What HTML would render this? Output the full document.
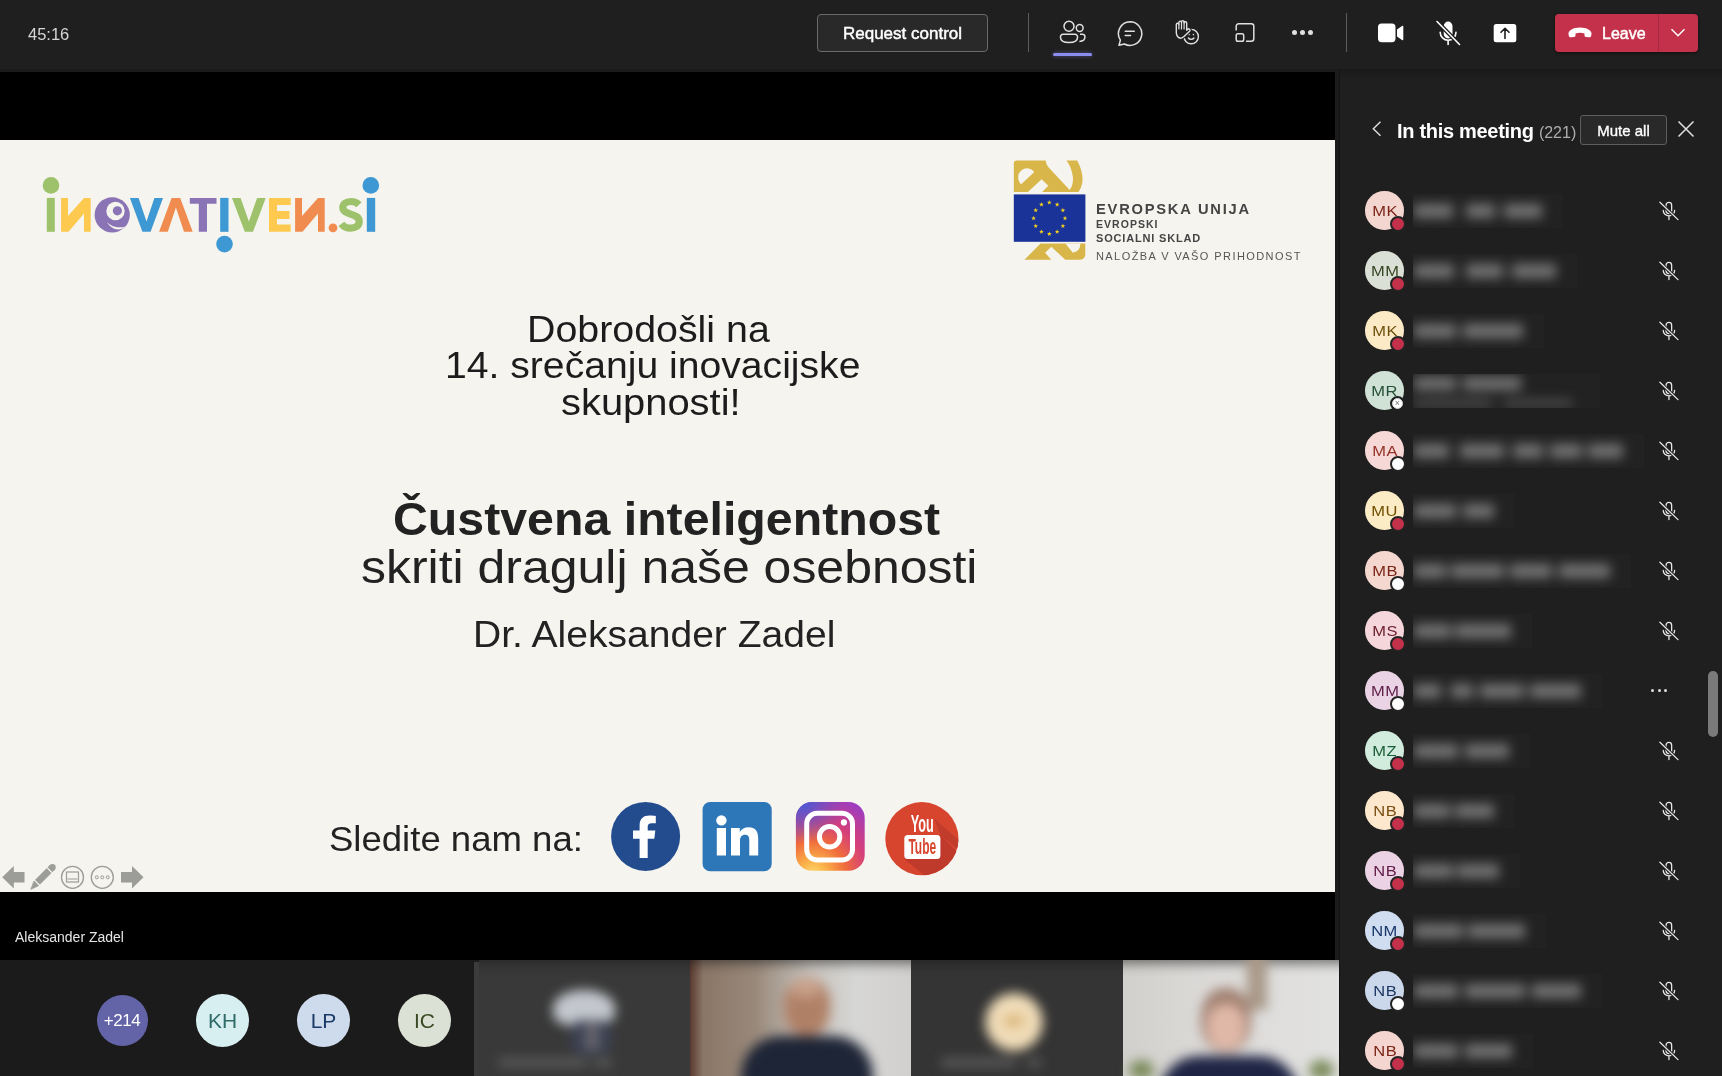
<!DOCTYPE html>
<html><head><meta charset="utf-8">
<style>
*{box-sizing:border-box;margin:0;padding:0}
html,body{width:1722px;height:1076px;overflow:hidden;background:#1f1f1f;font-family:"Liberation Sans",sans-serif}
.a{position:absolute}
body{will-change:transform}
</style></head>
<body>
<!-- TOP BAR -->
<div class="a" style="left:0;top:0;width:1722px;height:69px;background:#1f1f1f"></div>
<div class="a" style="left:0;top:69px;width:1722px;height:3px;background:#1a1a1a"></div>
<!-- STAGE -->
<div class="a" style="left:0;top:72px;width:1335px;height:888px;background:#000"></div>
<div class="a" style="left:1335px;top:69px;width:5px;height:1007px;background:#1b1b1b;border-right:1px solid #141414"></div>
<!-- SLIDE -->
<div id="slide" class="a" style="left:0;top:140px;width:1335px;height:752px;background:#f5f4ee;overflow:hidden">

<svg class="a" style="left:0;top:0" width="1335" height="752" viewBox="0 140 1335 752">
 <!-- inovativen.si -->
 <circle cx="51" cy="185.4" r="8.3" fill="#9dc26b"/>
 <rect x="46.8" y="197.9" width="8" height="33.9" fill="#9dc26b"/>
 <path d="M61.1 197.9H68V216L84 197.9H90.7V231.8H84V213.5L68.5 231.8H61.1Z" fill="#fdc94f"/>
 <circle cx="112.2" cy="214.9" r="17.6" fill="#8b74b5"/>
 <circle cx="115.5" cy="211" r="9.2" fill="#f5f4ee"/>
 <circle cx="117.4" cy="210.8" r="4.6" fill="#8b74b5"/>
 <path d="M106.5 221.5C111 227 119 228.5 125.5 226.5C121 231 112 231 106.5 221.5Z" fill="#f5f4ee"/>
 <path d="M129.9 197.9H138.6L146.5 221.5L154.4 197.9H163L150.6 231.8H142.4Z" fill="#3e98d3"/>
 <path d="M159.1 231.8L171.6 197.9H180.2L192.7 231.8H184L175.9 207.5L167.8 231.8Z" fill="#f08c4f"/>
 <path d="M189.8 197.9H216.5V203.8H207V231.8H198.8V203.8H189.8Z" fill="#8b74b5"/>
 <rect x="220.2" y="197.9" width="8.3" height="33.9" fill="#3e98d3"/>
 <circle cx="224.5" cy="244.1" r="8.3" fill="#3e98d3"/>
 <path d="M232 197.9H240.6L248.9 221.5L257.1 197.9H265.7L253 231.8H244.8Z" fill="#9dc26b"/>
 <path d="M269 197.9H290.7V205H277V211H289.5V219H277V224.6H290.7V231.8H269Z" fill="#fdc94f"/>
 <path d="M295.1 197.9H302V216L318 197.9H324.7V231.8H318V213.5L302.5 231.8H295.1Z" fill="#f08c4f"/>
 <circle cx="333" cy="227.9" r="4.4" fill="#f08c4f"/>
 <path d="M359 204.8C356.8 202.4 353.8 201.5 350.8 201.5C345.8 201.5 342.8 204.2 342.8 207.6C342.8 215.5 359.2 212.6 359.2 221.5C359.2 225.6 355.8 228.1 350.6 228.1C346.6 228.1 343.5 226.6 341.4 223.8" fill="none" stroke="#9dc26b" stroke-width="7.2"/>
 <rect x="366.8" y="197.9" width="8.4" height="33.9" fill="#3e98d3"/>
 <circle cx="370.8" cy="185.4" r="8.3" fill="#3e98d3"/>

 <!-- EU logo -->
 <g transform="translate(1005 152) scale(0.10778)">
  <path d="M82 370V105Q82 80 110 80H378Q382 125 412 150L600 352Q640 300 628 220Q612 130 570 80H670Q732 200 716 290Q706 342 682 370Z" fill="#d9b64a"/>
  <path d="M148 302Q108 250 128 200Q158 150 210 150Q250 155 272 185Z" fill="#f5f4ee"/>
  <path d="M212 372L340 252L402 312L344 372Z" fill="#f5f4ee"/>
  <path d="M180 1000L330 850H745V950Q740 1000 690 1000H560L430 880L372 935L430 1000Z" fill="#d9b64a"/>
  <path d="M560 850H700Q700 920 630 935Z" fill="#f5f4ee"/>
 </g>
 <rect x="1013.8" y="194.4" width="71.6" height="47.4" fill="#1a3399"/>
 <g fill="#f6d21b"><polygon points="1049.30,200.00 1049.89,201.69 1051.68,201.73 1050.25,202.81 1050.77,204.52 1049.30,203.50 1047.83,204.52 1048.35,202.81 1046.92,201.73 1048.71,201.69"/><polygon points="1057.15,202.10 1057.74,203.79 1059.53,203.83 1058.10,204.91 1058.62,206.63 1057.15,205.60 1055.68,206.63 1056.20,204.91 1054.77,203.83 1056.56,203.79"/><polygon points="1062.90,207.85 1063.48,209.54 1065.27,209.58 1063.85,210.66 1064.37,212.37 1062.90,211.35 1061.43,212.37 1061.95,210.66 1060.52,209.58 1062.31,209.54"/><polygon points="1065.00,215.70 1065.59,217.39 1067.38,217.43 1065.95,218.51 1066.47,220.22 1065.00,219.20 1063.53,220.22 1064.05,218.51 1062.62,217.43 1064.41,217.39"/><polygon points="1062.90,223.55 1063.48,225.24 1065.27,225.28 1063.85,226.36 1064.37,228.07 1062.90,227.05 1061.43,228.07 1061.95,226.36 1060.52,225.28 1062.31,225.24"/><polygon points="1057.15,229.30 1057.74,230.99 1059.53,231.02 1058.10,232.11 1058.62,233.82 1057.15,232.80 1055.68,233.82 1056.20,232.11 1054.77,231.02 1056.56,230.99"/><polygon points="1049.30,231.40 1049.89,233.09 1051.68,233.13 1050.25,234.21 1050.77,235.92 1049.30,234.90 1047.83,235.92 1048.35,234.21 1046.92,233.13 1048.71,233.09"/><polygon points="1041.45,229.30 1042.04,230.99 1043.83,231.02 1042.40,232.11 1042.92,233.82 1041.45,232.80 1039.98,233.82 1040.50,232.11 1039.07,231.02 1040.86,230.99"/><polygon points="1035.70,223.55 1036.29,225.24 1038.08,225.28 1036.65,226.36 1037.17,228.07 1035.70,227.05 1034.23,228.07 1034.75,226.36 1033.33,225.28 1035.12,225.24"/><polygon points="1033.60,215.70 1034.19,217.39 1035.98,217.43 1034.55,218.51 1035.07,220.22 1033.60,219.20 1032.13,220.22 1032.65,218.51 1031.22,217.43 1033.01,217.39"/><polygon points="1035.70,207.85 1036.29,209.54 1038.08,209.58 1036.65,210.66 1037.17,212.37 1035.70,211.35 1034.23,212.37 1034.75,210.66 1033.33,209.58 1035.12,209.54"/><polygon points="1041.45,202.10 1042.04,203.79 1043.83,203.83 1042.40,204.91 1042.92,206.63 1041.45,205.60 1039.98,206.63 1040.50,204.91 1039.07,203.83 1040.86,203.79"/></g>
 <text x="1096" y="214" font-family="Liberation Sans" font-weight="bold" font-size="14.7" letter-spacing="1.77" fill="#444">EVROPSKA UNIJA</text>
 <text x="1096" y="228" font-family="Liberation Sans" font-weight="bold" font-size="10.5" letter-spacing="1.03" fill="#444">EVROPSKI</text>
 <text x="1096" y="242" font-family="Liberation Sans" font-weight="bold" font-size="11" letter-spacing="0.83" fill="#444">SOCIALNI SKLAD</text>
 <text x="1096" y="260.2" font-family="Liberation Sans" font-size="11" letter-spacing="1.42" fill="#555">NALOŽBA V VAŠO PRIHODNOST</text>

 <!-- social -->
 <circle cx="645.6" cy="836.4" r="34.5" fill="#234c8f"/>
 <path d="M639.6 858V838.7H633V830.6H639.6V825.5C639.6 818.8 643.5 815.6 649.5 815.6C652.2 815.6 654.6 815.8 655.8 816V823.2H651.6C648.8 823.2 647.7 824.4 647.7 826.9V830.6H655.3L654.3 838.7H647.7V858Z" fill="#fff"/>
 <rect x="702.6" y="802.1" width="69.1" height="69.1" rx="7.5" fill="#2d76b7"/>
 <circle cx="721.4" cy="820.4" r="5.2" fill="#fff"/>
 <rect x="716.8" y="828" width="9.2" height="27.5" fill="#fff"/>
 <path d="M731 828H739.8V832C741.6 829.2 744.6 827.3 748.8 827.3C755 827.3 758.2 831 758.2 838.5V855.5H749.3V840.2C749.3 836.6 748 834.8 745.2 834.8C741.8 834.8 740 837 740 841V855.5H731Z" fill="#fff"/>
 <defs>
  <radialGradient id="ig1" cx="0.25" cy="1.05" r="1.2">
   <stop offset="0" stop-color="#fdd873"/>
   <stop offset="0.15" stop-color="#fbb54a"/>
   <stop offset="0.4" stop-color="#f06c3c"/>
   <stop offset="0.65" stop-color="#d53f7a"/>
   <stop offset="1" stop-color="#9b3cc3"/>
  </radialGradient>
  <radialGradient id="ig2" cx="0.1" cy="0" r="0.6">
   <stop offset="0" stop-color="#4a5bd6"/>
   <stop offset="1" stop-color="#4a5bd6" stop-opacity="0"/>
  </radialGradient>
  <clipPath id="ytc"><circle cx="921.9" cy="838.7" r="36.6"/></clipPath>
 </defs>
 <rect x="795.9" y="802.1" width="68.8" height="68.6" rx="16" fill="url(#ig1)"/>
 <rect x="795.9" y="802.1" width="68.8" height="68.6" rx="16" fill="url(#ig2)"/>
 <rect x="806.7" y="813.3" width="45.8" height="46.8" rx="10.5" fill="none" stroke="#fff" stroke-width="5"/>
 <circle cx="829.6" cy="836.7" r="10.2" fill="none" stroke="#fff" stroke-width="5"/>
 <circle cx="843.9" cy="822.4" r="3.1" fill="#fff"/>
 <circle cx="921.9" cy="838.7" r="36.6" fill="#d8452f"/>
 <path d="M940.4 835L970 865L930 880L904.3 859Z" fill="#c03a2b" clip-path="url(#ytc)"/>
 <path d="M933.8 818L970 850L970 860L940.4 835Z" fill="#c23c2c" clip-path="url(#ytc)"/>
 <text x="922.2" y="832.1" text-anchor="middle" font-family="Liberation Sans" font-weight="bold" font-size="24.4" fill="#fff" transform="translate(922.2 0) scale(0.52 1) translate(-922.2 0)">You</text>
 <rect x="904.3" y="835.1" width="36.1" height="23.9" rx="3.5" fill="#fff"/>
 <text x="922.3" y="854.5" text-anchor="middle" font-family="Liberation Sans" font-weight="bold" font-size="21.4" fill="#d8452f" transform="translate(922.3 0) scale(0.56 1) translate(-922.3 0)">Tube</text>
</svg>
<div id="t1" class="a" style="transform:scaleX(1.093);transform-origin:0 0;left:527px;top:171.8px;font-size:36px;line-height:36px;color:#1c1c1c;white-space:nowrap">Dobrodošli na</div>
<div id="t2" class="a" style="transform:scaleX(1.087);transform-origin:0 0;left:445px;top:207.8px;font-size:36px;line-height:36px;color:#1c1c1c;white-space:nowrap">14. srečanju inovacijske</div>
<div id="t3" class="a" style="transform:scaleX(1.108);transform-origin:0 0;left:561px;top:245.2px;font-size:36px;line-height:36px;color:#1c1c1c;white-space:nowrap">skupnosti!</div>
<div id="t4" class="a" style="transform:scaleX(1.061);transform-origin:0 0;left:392.5px;top:357px;font-size:45.5px;line-height:45.5px;font-weight:bold;color:#222;white-space:nowrap">Čustvena inteligentnost</div>
<div id="t5" class="a" style="transform:scaleX(1.086);transform-origin:0 0;left:360.5px;top:404.3px;font-size:46px;line-height:46px;color:#222;white-space:nowrap">skriti dragulj naše osebnosti</div>
<div id="t6" class="a" style="transform:scaleX(1.055);transform-origin:0 0;left:473px;top:476px;font-size:37px;line-height:37px;color:#222;white-space:nowrap">Dr. Aleksander Zadel</div>
<div id="t7" class="a" style="transform:scaleX(1.035);transform-origin:0 0;left:329px;top:680.6px;font-size:35.3px;line-height:35.3px;color:#222;white-space:nowrap">Sledite nam na:</div>
</div>
<!-- GALLERY -->
<div class="a" style="left:0;top:960px;width:1335px;height:116px;background:#1b1b1b"></div>
<!-- PANEL -->
<div class="a" style="left:1340px;top:69px;width:382px;height:1007px;background:linear-gradient(#1a1a1a 0px,#1f1f1f 11px)"></div>

<!-- TOPBAR CONTENT -->
<div class="a" style="left:28px;top:25.6px;font-size:16.5px;line-height:16.5px;color:#d6d6d6">45:16</div>
<div class="a" style="left:817px;top:14px;width:171px;height:38px;border:1px solid #6a6a6a;border-radius:4px;background:#292929"></div>
<div class="a" style="left:817px;top:25px;width:171px;text-align:center;font-size:17px;line-height:17px;color:#fff;-webkit-text-stroke:0.45px #fff">Request control</div>
<div class="a" style="left:1028px;top:13px;width:1px;height:39px;background:#5c5c5c"></div>
<div class="a" style="left:1346px;top:13px;width:1px;height:39px;background:#5c5c5c"></div>
<div class="a" style="left:1053px;top:53px;width:39px;height:3px;border-radius:2px;background:#8b8cf0;box-shadow:0 0 4px rgba(139,140,240,.5)"></div>
<!-- people icon -->
<svg class="a" style="left:1059px;top:19px" width="28" height="28" viewBox="0 0 28 28" fill="none" stroke="#e0e0e0" stroke-width="1.5">
 <circle cx="10" cy="7.2" r="5"/>
 <circle cx="20.7" cy="9" r="3.4"/>
 <path d="M4 15.2h12a2.5 2.5 0 0 1 2.5 2.5v0.8c0 3-3 5-8.5 5s-8.5-2-8.5-5v-0.8a2.5 2.5 0 0 1 2.5-2.5z"/>
 <path d="M21 15.2h2.5a2.4 2.4 0 0 1 2.4 2.4v0.5c0 2.5-2 4.3-5.5 4.3"/>
</svg>
<!-- chat icon -->
<svg class="a" style="left:1116px;top:19px" width="28" height="28" viewBox="0 0 28 28" fill="none" stroke="#e0e0e0" stroke-width="1.5">
 <path d="M14 2.8a11.8 11.8 0 1 1-5.6 22.2L3 26.3l1.4-5.2A11.8 11.8 0 0 1 14 2.8z" stroke-linejoin="round"/>
 <path d="M9.3 12.2h8.9M9.3 16.5h5.2" stroke-linecap="round" stroke-width="1.6"/>
</svg>
<!-- react icon -->
<svg class="a" style="left:1174px;top:19px" width="28" height="28" viewBox="0 0 28 28" fill="none" stroke="#e0e0e0" stroke-width="1.4" stroke-linecap="round" stroke-linejoin="round">
 <circle cx="17.2" cy="17.6" r="7.2"/>
 <circle cx="15.1" cy="15.6" r=".8" fill="#e0e0e0" stroke="none"/>
 <circle cx="19.4" cy="15.6" r=".8" fill="#e0e0e0" stroke="none"/>
 <path d="M14.4 19c1.5 1.8 4.1 1.8 5.6 0"/>
 <path id="hand" d="M2.3 12.5V5.6a1.3 1.3 0 0 1 2.6 0V3.4a1.3 1.3 0 0 1 2.6 0V2.9a1.3 1.3 0 0 1 2.6 0V4a1.3 1.3 0 0 1 2.6 0V11.2l1-1a1.4 1.4 0 0 1 2.1 1.8L10 17.6C9 18.6 7.9 19.2 6.7 19.2C4.2 19.2 2.3 16.5 2.3 13.5Z" fill="#1f1f1f" stroke="#1f1f1f" stroke-width="3.4"/>
 <path d="M2.3 12.5V5.6a1.3 1.3 0 0 1 2.6 0V3.4a1.3 1.3 0 0 1 2.6 0V2.9a1.3 1.3 0 0 1 2.6 0V4a1.3 1.3 0 0 1 2.6 0V11.2l1-1a1.4 1.4 0 0 1 2.1 1.8L10 17.6C9 18.6 7.9 19.2 6.7 19.2C4.2 19.2 2.3 16.5 2.3 13.5Z"/>
 <path d="M4.9 5.6V10M7.5 3.4V10M10.1 2.9V10" stroke-width="1.2"/>
</svg>
<!-- layout icon -->
<svg class="a" style="left:1233px;top:21px" width="24" height="24" viewBox="0 0 24 24" fill="none" stroke="#e0e0e0" stroke-width="1.5">
 <path d="M3.2 9.5V5.2a2.5 2.5 0 0 1 2.5-2.5h12.6a2.5 2.5 0 0 1 2.5 2.5v12.6a2.5 2.5 0 0 1-2.5 2.5h-5.3"/>
 <rect x="3.2" y="12.8" width="7.5" height="7.5" rx="1.8"/>
</svg>
<!-- more -->
<div class="a" style="left:1292px;top:30px;width:5px;height:5px;border-radius:50%;background:#e0e0e0"></div>
<div class="a" style="left:1300px;top:30px;width:5px;height:5px;border-radius:50%;background:#e0e0e0"></div>
<div class="a" style="left:1308px;top:30px;width:5px;height:5px;border-radius:50%;background:#e0e0e0"></div>
<!-- camera -->
<svg class="a" style="left:1376px;top:20px" width="30" height="26" viewBox="0 0 30 26" fill="#fff">
 <rect x="2" y="3.6" width="17.5" height="18.6" rx="3.6"/>
 <path d="M21 9.6l5-3.6c.7-.5 1.3-.2 1.3.7v12.6c0 .9-.6 1.2-1.3.7l-5-3.6z"/>
</svg>
<!-- mic off -->
<svg class="a" style="left:1434px;top:19px" width="28" height="28" viewBox="0 0 28 28" fill="none" stroke="#fff" stroke-width="1.6">
 <path d="M10.5 7a3.6 3.6 0 0 1 7.2 0v8a3.6 3.6 0 0 1-7.2 0z" fill="#fff"/>
 <path d="M6.2 13.2c0 4.5 3.5 8 7.9 8s7.9-3.5 7.9-8M14.1 21.2v4.3" stroke-linecap="round"/>
 <path d="M3 2.5l22.5 23" stroke="#1f1f1f" stroke-width="4"/>
 <path d="M3 2.5l22.5 23" stroke-linecap="round"/>
</svg>
<!-- share -->
<svg class="a" style="left:1491px;top:20px" width="28" height="26" viewBox="0 0 28 26" fill="#fff">
 <path d="M5.2 4h17.6a2.5 2.5 0 0 1 2.5 2.5v13.2a2.5 2.5 0 0 1-2.5 2.5H5.2a2.5 2.5 0 0 1-2.5-2.5V6.5A2.5 2.5 0 0 1 5.2 4z"/>
 <path d="M14 18.5V8.5M10 12.3l4-4 4 4" fill="none" stroke="#1f1f1f" stroke-width="1.6" stroke-linecap="round" stroke-linejoin="round"/>
</svg>
<!-- leave -->
<div class="a" style="left:1555px;top:14px;width:143px;height:38px;border-radius:4px;background:#c4314b;box-shadow:0 1px 3px rgba(0,0,0,.5)"></div>
<div class="a" style="left:1658px;top:14px;width:1px;height:38px;background:#a82a40"></div>
<svg class="a" style="left:1567px;top:25px" width="26" height="14" viewBox="0 0 26 14" fill="#fff">
 <path d="M1.6 9.8c-.4-2 .3-3.6 2.2-4.8C6.4 3.4 9.6 2.6 13 2.6s6.6.8 9.2 2.4c1.9 1.2 2.6 2.8 2.2 4.8l-.3 1.2c-.2.9-1 1.4-1.9 1.3l-3.2-.4c-.9-.1-1.5-.8-1.5-1.7V8.4c-1.5-.5-3-.7-4.5-.7s-3 .2-4.5.7v1.8c0 .9-.6 1.6-1.5 1.7l-3.2.4c-.9.1-1.7-.4-1.9-1.3z"/>
</svg>
<div class="a" style="left:1602px;top:26px;font-size:16px;line-height:16px;color:#fff;-webkit-text-stroke:0.45px #fff">Leave</div>
<svg class="a" style="left:1669px;top:26px" width="18" height="12" viewBox="0 0 18 12" fill="none" stroke="#fff" stroke-width="1.5"><path d="M2.5 3.2l6.5 6.5 6.5-6.5"/></svg>



<!-- SLIDE CONTROLS -->
<svg class="a" style="left:0;top:860px" width="150" height="32" viewBox="0 860 150 32">
 <path d="M2.2 877.3L13.8 866V872H24.5V882.5H13.8V888.5Z" fill="#9c9c98"/>
 <path d="M50.24 864.94L54.76 869.46L38.26 885.96L30.7 889.4L33.74 881.44Z" fill="#9c9c98" stroke="#9c9c98" stroke-width="0.6" stroke-linejoin="round"/>
 <circle cx="52.5" cy="867.2" r="3.2" fill="#9c9c98"/>
 <path d="M46.95 867.65L52.05 872.75M34.2 879.9L39.8 885.5" stroke="#f5f4ee" stroke-width="1.3"/>
 <circle cx="72.5" cy="877.3" r="11" fill="none" stroke="#9c9c98" stroke-width="1.3"/>
 <rect x="66.5" y="872" width="12" height="10" fill="none" stroke="#9c9c98" stroke-width="1.2"/>
 <path d="M67.5 879h10" stroke="#9c9c98" stroke-width="1"/>
 <circle cx="102.3" cy="877.3" r="11" fill="none" stroke="#9c9c98" stroke-width="1.3"/>
 <circle cx="96.8" cy="877.3" r="1.5" fill="none" stroke="#9c9c98" stroke-width="1"/>
 <circle cx="102.3" cy="877.3" r="1.5" fill="none" stroke="#9c9c98" stroke-width="1"/>
 <circle cx="107.8" cy="877.3" r="1.5" fill="none" stroke="#9c9c98" stroke-width="1"/>
 <path d="M143.5 877.3L132 866V872H121V882.5H132V888.5Z" fill="#9c9c98"/>
</svg>
<div class="a" style="left:15px;top:930px;font-size:14px;line-height:14px;color:#e6e6e6">Aleksander Zadel</div>
<!-- GALLERY avatars -->
<div class="a" style="left:96.5px;top:995px;width:51px;height:51px;border-radius:50%;background:#6264a7;color:#fff;font-size:17px;line-height:51px;text-align:center;letter-spacing:-0.5px">+214</div>
<div class="a" style="left:196px;top:994px;width:53px;height:53px;border-radius:50%;background:#d8eff1;color:#2e6b69;font-size:21px;line-height:53px;text-align:center">KH</div>
<div class="a" style="left:297px;top:994px;width:53px;height:53px;border-radius:50%;background:#cddbec;color:#1b3a67;font-size:21px;line-height:53px;text-align:center">LP</div>
<div class="a" style="left:398px;top:994px;width:53px;height:53px;border-radius:50%;background:#dce1d5;color:#394a25;font-size:21px;line-height:53px;text-align:center">IC</div>
<!-- video tiles -->
<div class="a" style="left:474px;top:962px;width:5px;height:114px;background:#3c3c3c"></div>
<div class="a" style="left:479px;top:960px;width:860px;height:116px;overflow:hidden;background:#363636">
 <div class="a" style="left:0;top:0;width:211px;height:116px;background:#393939"></div>
 <div class="a" style="left:211px;top:0;width:221px;height:116px;background:linear-gradient(90deg,#5a3a30 0%,#8a7666 6%,#9a8a7c 30%,#c8c4bf 55%,#d6d6d4 75%,#d2d0ce 100%)"></div>
 <div class="a" style="left:432px;top:0;width:212px;height:116px;background:#343434"></div>
 <div class="a" style="left:644px;top:0;width:216px;height:116px;background:linear-gradient(90deg,#d2d0cc 0%,#dcdad8 40%,#e2e2e1 100%)"></div>
 <div class="a" style="left:0;top:0;width:860px;height:116px;filter:blur(6px)">
  <div class="a" style="left:-20px;top:-20px;width:900px;height:24px;background:#1a1a1a;opacity:.55"></div>
  <div class="a" style="left:74px;top:30px;width:62px;height:36px;border-radius:50% 50% 35% 35%;background:#c4c8ce"></div>
  <div class="a" style="left:92px;top:60px;width:40px;height:34px;border-radius:30%;background:#3c4254"></div><div class="a" style="left:107px;top:60px;width:12px;height:30px;background:#6a6870"></div>
  <div class="a" style="left:20px;top:98px;width:88px;height:9px;background:#5a5a5a"></div>
  <div class="a" style="left:116px;top:98px;width:16px;height:9px;background:#5a5a5a"></div>
  <div class="a" style="left:305px;top:18px;width:46px;height:58px;border-radius:45%;background:#b08066"></div>
  <div class="a" style="left:312px;top:18px;width:30px;height:20px;border-radius:50%;background:#c8a08a"></div>
  <div class="a" style="left:262px;top:76px;width:132px;height:60px;border-radius:40px 40px 0 0;background:#1e2536"></div>
  <div class="a" style="left:506px;top:33px;width:58px;height:58px;border-radius:50%;background:#f0dcb8"></div>
  <div class="a" style="left:524px;top:56px;width:22px;height:10px;border-radius:50%;background:#d8b070"></div>
  <div class="a" style="left:462px;top:98px;width:75px;height:9px;background:#5a5a5a"></div>
  <div class="a" style="left:548px;top:98px;width:14px;height:9px;background:#5a5a5a"></div>
  <div class="a" style="left:768px;top:-10px;width:20px;height:60px;background:#a89888"></div>
  <div class="a" style="left:722px;top:28px;width:50px;height:64px;border-radius:45%;background:#a08070"></div>
  <div class="a" style="left:728px;top:44px;width:38px;height:46px;border-radius:45%;background:#e0b8a8"></div>
  <div class="a" style="left:680px;top:96px;width:140px;height:50px;border-radius:40px 40px 0 0;background:#1e2444"></div>
  <div class="a" style="left:650px;top:100px;width:25px;height:20px;border-radius:50%;background:#7a8a5a"></div>
  <div class="a" style="left:830px;top:100px;width:25px;height:20px;border-radius:50%;background:#7a8a5a"></div>
 </div>
</div>
<!-- PANEL HEADER -->
<svg class="a" style="left:1368px;top:119px" width="16" height="20" viewBox="0 0 16 20" fill="none" stroke="#e0e0e0" stroke-width="1.4"><path d="M12.5 2.8L5.3 9.8l7.2 7"/></svg>
<div class="a" style="left:1397px;top:120.5px;font-size:20px;line-height:20px;font-weight:bold;color:#fff;white-space:nowrap;letter-spacing:-0.3px">In this meeting <span style="font-weight:normal;font-size:16px;color:#adadad;letter-spacing:0">(221)</span></div>
<div class="a" style="left:1580px;top:115px;width:87px;height:30px;border:1px solid #5e5e5e;border-radius:3px;background:#292929"></div>
<div class="a" style="left:1580px;top:123px;width:87px;text-align:center;font-size:15px;line-height:15px;color:#fff;-webkit-text-stroke:0.35px #fff">Mute all</div>
<svg class="a" style="left:1676px;top:119px" width="20" height="20" viewBox="0 0 20 20" fill="none" stroke="#e0e0e0" stroke-width="1.5"><path d="M2.5 2.5l15 15M17.5 2.5l-15 15"/></svg>
<!-- ROWS -->
<div class="a" style="left:1365.3px;top:191.25px;width:38.5px;height:38.5px;border-radius:50%;background:#f4d6d0;color:#7b2518;font-size:15px;line-height:38.5px;text-align:center;letter-spacing:0.4px;text-indent:0.4px;padding-top:1.2px"><span style="display:inline-block;transform:scaleX(1.1)">MK</span></div>
<div class="a" style="left:1390px;top:216.1px;width:16px;height:16px;border-radius:50%;background:#c4314b;border:2px solid #232323"></div>
<div class="a" style="left:1413px;top:193.5px;width:150px;height:34px;overflow:hidden;background:#222222"><div class="a" style="left:0;top:0;width:100%;height:100%;filter:blur(6px)"><div class="a" style="left:1px;top:10.0px;width:39px;height:14px;background:#747474"></div><div class="a" style="left:53px;top:10.0px;width:29px;height:14px;background:#747474"></div><div class="a" style="left:91px;top:10.0px;width:38px;height:14px;background:#747474"></div></div></div>
<svg class="a" style="left:1657px;top:198.5px" width="24" height="24" viewBox="0 0 24 24" fill="none" stroke="#e6e6e6" stroke-width="1.3" stroke-linecap="round">
 <path d="M9.05 6.15a2.8 2.8 0 0 1 5.6 0v5.7a2.8 2.8 0 0 1-5.6 0z"/>
 <path d="M6.25 11.5c0 3 2.5 5.35 5.7 5.35s5.7-2.35 5.7-5.35M11.95 16.85v3.7"/>
 <path d="M2.9 3.3L21 20.6" stroke="#1f1f1f" stroke-width="3.2"/>
 <path d="M2.9 3.3L21 20.6"/>
</svg>
<div class="a" style="left:1365.3px;top:251.25px;width:38.5px;height:38.5px;border-radius:50%;background:#dbe0d6;color:#354623;font-size:15px;line-height:38.5px;text-align:center;letter-spacing:0.4px;text-indent:0.4px;padding-top:1.2px"><span style="display:inline-block;transform:scaleX(1.1)">MM</span></div>
<div class="a" style="left:1390px;top:276.1px;width:16px;height:16px;border-radius:50%;background:#c4314b;border:2px solid #232323"></div>
<div class="a" style="left:1413px;top:253.5px;width:164px;height:34px;overflow:hidden;background:#222222"><div class="a" style="left:0;top:0;width:100%;height:100%;filter:blur(6px)"><div class="a" style="left:1px;top:10.0px;width:40px;height:14px;background:#747474"></div><div class="a" style="left:53px;top:10.0px;width:37px;height:14px;background:#747474"></div><div class="a" style="left:99px;top:10.0px;width:44px;height:14px;background:#747474"></div></div></div>
<svg class="a" style="left:1657px;top:258.5px" width="24" height="24" viewBox="0 0 24 24" fill="none" stroke="#e6e6e6" stroke-width="1.3" stroke-linecap="round">
 <path d="M9.05 6.15a2.8 2.8 0 0 1 5.6 0v5.7a2.8 2.8 0 0 1-5.6 0z"/>
 <path d="M6.25 11.5c0 3 2.5 5.35 5.7 5.35s5.7-2.35 5.7-5.35M11.95 16.85v3.7"/>
 <path d="M2.9 3.3L21 20.6" stroke="#1f1f1f" stroke-width="3.2"/>
 <path d="M2.9 3.3L21 20.6"/>
</svg>
<div class="a" style="left:1365.3px;top:311.25px;width:38.5px;height:38.5px;border-radius:50%;background:#fbeac5;color:#6e4f0e;font-size:15px;line-height:38.5px;text-align:center;letter-spacing:0.4px;text-indent:0.4px;padding-top:1.2px"><span style="display:inline-block;transform:scaleX(1.1)">MK</span></div>
<div class="a" style="left:1390px;top:336.1px;width:16px;height:16px;border-radius:50%;background:#c4314b;border:2px solid #232323"></div>
<div class="a" style="left:1413px;top:313.5px;width:131px;height:34px;overflow:hidden;background:#222222"><div class="a" style="left:0;top:0;width:100%;height:100%;filter:blur(6px)"><div class="a" style="left:1px;top:10.0px;width:42px;height:14px;background:#747474"></div><div class="a" style="left:50px;top:10.0px;width:60px;height:14px;background:#747474"></div></div></div>
<svg class="a" style="left:1657px;top:318.5px" width="24" height="24" viewBox="0 0 24 24" fill="none" stroke="#e6e6e6" stroke-width="1.3" stroke-linecap="round">
 <path d="M9.05 6.15a2.8 2.8 0 0 1 5.6 0v5.7a2.8 2.8 0 0 1-5.6 0z"/>
 <path d="M6.25 11.5c0 3 2.5 5.35 5.7 5.35s5.7-2.35 5.7-5.35M11.95 16.85v3.7"/>
 <path d="M2.9 3.3L21 20.6" stroke="#1f1f1f" stroke-width="3.2"/>
 <path d="M2.9 3.3L21 20.6"/>
</svg>
<div class="a" style="left:1365.3px;top:371.25px;width:38.5px;height:38.5px;border-radius:50%;background:#d0e1d6;color:#245034;font-size:15px;line-height:38.5px;text-align:center;letter-spacing:0.4px;text-indent:0.4px;padding-top:1.2px"><span style="display:inline-block;transform:scaleX(1.1)">MR</span></div>
<div class="a" style="left:1390px;top:396.1px;width:15px;height:15px;border-radius:50%;background:#1f1f1f;border:2px solid #1f1f1f"><div style="width:11px;height:11px;border-radius:50%;border:1.5px solid #d6d6d6;background:#fff;color:#777;font-size:9px;line-height:8px;text-align:center">×</div></div>
<div class="a" style="left:1413px;top:373.5px;width:187px;height:34px;overflow:hidden;background:#222222"><div class="a" style="left:0;top:0;width:100%;height:100%;filter:blur(6px)"><div class="a" style="left:1px;top:3.0px;width:42px;height:13px;background:#747474"></div><div class="a" style="left:50px;top:3.0px;width:58px;height:13px;background:#747474"></div><div class="a" style="left:1px;top:25.0px;width:78px;height:8px;background:#4c4c4c"></div><div class="a" style="left:91px;top:25.0px;width:68px;height:8px;background:#4c4c4c"></div></div></div>
<svg class="a" style="left:1657px;top:378.5px" width="24" height="24" viewBox="0 0 24 24" fill="none" stroke="#e6e6e6" stroke-width="1.3" stroke-linecap="round">
 <path d="M9.05 6.15a2.8 2.8 0 0 1 5.6 0v5.7a2.8 2.8 0 0 1-5.6 0z"/>
 <path d="M6.25 11.5c0 3 2.5 5.35 5.7 5.35s5.7-2.35 5.7-5.35M11.95 16.85v3.7"/>
 <path d="M2.9 3.3L21 20.6" stroke="#1f1f1f" stroke-width="3.2"/>
 <path d="M2.9 3.3L21 20.6"/>
</svg>
<div class="a" style="left:1365.3px;top:431.25px;width:38.5px;height:38.5px;border-radius:50%;background:#f6d8d6;color:#923227;font-size:15px;line-height:38.5px;text-align:center;letter-spacing:0.4px;text-indent:0.4px;padding-top:1.2px"><span style="display:inline-block;transform:scaleX(1.1)">MA</span></div>
<div class="a" style="left:1390px;top:456.1px;width:16px;height:16px;border-radius:50%;background:#fff;border:2px solid #232323"></div>
<div class="a" style="left:1413px;top:433.5px;width:231px;height:34px;overflow:hidden;background:#222222"><div class="a" style="left:0;top:0;width:100%;height:100%;filter:blur(6px)"><div class="a" style="left:1px;top:10.0px;width:35px;height:14px;background:#747474"></div><div class="a" style="left:47px;top:10.0px;width:44px;height:14px;background:#747474"></div><div class="a" style="left:100px;top:10.0px;width:30px;height:14px;background:#747474"></div><div class="a" style="left:137px;top:10.0px;width:32px;height:14px;background:#747474"></div><div class="a" style="left:175px;top:10.0px;width:35px;height:14px;background:#747474"></div></div></div>
<svg class="a" style="left:1657px;top:438.5px" width="24" height="24" viewBox="0 0 24 24" fill="none" stroke="#e6e6e6" stroke-width="1.3" stroke-linecap="round">
 <path d="M9.05 6.15a2.8 2.8 0 0 1 5.6 0v5.7a2.8 2.8 0 0 1-5.6 0z"/>
 <path d="M6.25 11.5c0 3 2.5 5.35 5.7 5.35s5.7-2.35 5.7-5.35M11.95 16.85v3.7"/>
 <path d="M2.9 3.3L21 20.6" stroke="#1f1f1f" stroke-width="3.2"/>
 <path d="M2.9 3.3L21 20.6"/>
</svg>
<div class="a" style="left:1365.3px;top:491.25px;width:38.5px;height:38.5px;border-radius:50%;background:#fbecc5;color:#704f00;font-size:15px;line-height:38.5px;text-align:center;letter-spacing:0.4px;text-indent:0.4px;padding-top:1.2px"><span style="display:inline-block;transform:scaleX(1.1)">MU</span></div>
<div class="a" style="left:1390px;top:516.1px;width:16px;height:16px;border-radius:50%;background:#c4314b;border:2px solid #232323"></div>
<div class="a" style="left:1413px;top:493.5px;width:102px;height:34px;overflow:hidden;background:#222222"><div class="a" style="left:0;top:0;width:100%;height:100%;filter:blur(6px)"><div class="a" style="left:1px;top:10.0px;width:42px;height:14px;background:#747474"></div><div class="a" style="left:50px;top:10.0px;width:31px;height:14px;background:#747474"></div></div></div>
<svg class="a" style="left:1657px;top:498.5px" width="24" height="24" viewBox="0 0 24 24" fill="none" stroke="#e6e6e6" stroke-width="1.3" stroke-linecap="round">
 <path d="M9.05 6.15a2.8 2.8 0 0 1 5.6 0v5.7a2.8 2.8 0 0 1-5.6 0z"/>
 <path d="M6.25 11.5c0 3 2.5 5.35 5.7 5.35s5.7-2.35 5.7-5.35M11.95 16.85v3.7"/>
 <path d="M2.9 3.3L21 20.6" stroke="#1f1f1f" stroke-width="3.2"/>
 <path d="M2.9 3.3L21 20.6"/>
</svg>
<div class="a" style="left:1365.3px;top:551.25px;width:38.5px;height:38.5px;border-radius:50%;background:#f4d7cf;color:#7b2518;font-size:15px;line-height:38.5px;text-align:center;letter-spacing:0.4px;text-indent:0.4px;padding-top:1.2px"><span style="display:inline-block;transform:scaleX(1.1)">MB</span></div>
<div class="a" style="left:1390px;top:576.1px;width:16px;height:16px;border-radius:50%;background:#fff;border:2px solid #232323"></div>
<div class="a" style="left:1413px;top:553.5px;width:218px;height:34px;overflow:hidden;background:#222222"><div class="a" style="left:0;top:0;width:100%;height:100%;filter:blur(6px)"><div class="a" style="left:1px;top:10.0px;width:32px;height:14px;background:#747474"></div><div class="a" style="left:38px;top:10.0px;width:53px;height:14px;background:#747474"></div><div class="a" style="left:97px;top:10.0px;width:42px;height:14px;background:#747474"></div><div class="a" style="left:146px;top:10.0px;width:51px;height:14px;background:#747474"></div></div></div>
<svg class="a" style="left:1657px;top:558.5px" width="24" height="24" viewBox="0 0 24 24" fill="none" stroke="#e6e6e6" stroke-width="1.3" stroke-linecap="round">
 <path d="M9.05 6.15a2.8 2.8 0 0 1 5.6 0v5.7a2.8 2.8 0 0 1-5.6 0z"/>
 <path d="M6.25 11.5c0 3 2.5 5.35 5.7 5.35s5.7-2.35 5.7-5.35M11.95 16.85v3.7"/>
 <path d="M2.9 3.3L21 20.6" stroke="#1f1f1f" stroke-width="3.2"/>
 <path d="M2.9 3.3L21 20.6"/>
</svg>
<div class="a" style="left:1365.3px;top:611.25px;width:38.5px;height:38.5px;border-radius:50%;background:#f5d6da;color:#6d202e;font-size:15px;line-height:38.5px;text-align:center;letter-spacing:0.4px;text-indent:0.4px;padding-top:1.2px"><span style="display:inline-block;transform:scaleX(1.1)">MS</span></div>
<div class="a" style="left:1390px;top:636.1px;width:16px;height:16px;border-radius:50%;background:#c4314b;border:2px solid #232323"></div>
<div class="a" style="left:1413px;top:613.5px;width:119px;height:34px;overflow:hidden;background:#222222"><div class="a" style="left:0;top:0;width:100%;height:100%;filter:blur(6px)"><div class="a" style="left:1px;top:10.0px;width:37px;height:14px;background:#747474"></div><div class="a" style="left:42px;top:10.0px;width:56px;height:14px;background:#747474"></div></div></div>
<svg class="a" style="left:1657px;top:618.5px" width="24" height="24" viewBox="0 0 24 24" fill="none" stroke="#e6e6e6" stroke-width="1.3" stroke-linecap="round">
 <path d="M9.05 6.15a2.8 2.8 0 0 1 5.6 0v5.7a2.8 2.8 0 0 1-5.6 0z"/>
 <path d="M6.25 11.5c0 3 2.5 5.35 5.7 5.35s5.7-2.35 5.7-5.35M11.95 16.85v3.7"/>
 <path d="M2.9 3.3L21 20.6" stroke="#1f1f1f" stroke-width="3.2"/>
 <path d="M2.9 3.3L21 20.6"/>
</svg>
<div class="a" style="left:1365.3px;top:671.25px;width:38.5px;height:38.5px;border-radius:50%;background:#e9d3e4;color:#5f1d49;font-size:15px;line-height:38.5px;text-align:center;letter-spacing:0.4px;text-indent:0.4px;padding-top:1.2px"><span style="display:inline-block;transform:scaleX(1.1)">MM</span></div>
<div class="a" style="left:1390px;top:696.1px;width:16px;height:16px;border-radius:50%;background:#fff;border:2px solid #232323"></div>
<div class="a" style="left:1413px;top:673.5px;width:189px;height:34px;overflow:hidden;background:#222222"><div class="a" style="left:0;top:0;width:100%;height:100%;filter:blur(6px)"><div class="a" style="left:1px;top:10.0px;width:27px;height:14px;background:#747474"></div><div class="a" style="left:38px;top:10.0px;width:22px;height:14px;background:#747474"></div><div class="a" style="left:67px;top:10.0px;width:44px;height:14px;background:#747474"></div><div class="a" style="left:117px;top:10.0px;width:51px;height:14px;background:#747474"></div></div></div>
<div class="a" style="left:1651.0px;top:689.0px;width:3px;height:3px;border-radius:50%;background:#e0e0e0"></div><div class="a" style="left:1657.5px;top:689.0px;width:3px;height:3px;border-radius:50%;background:#e0e0e0"></div><div class="a" style="left:1664.0px;top:689.0px;width:3px;height:3px;border-radius:50%;background:#e0e0e0"></div>
<div class="a" style="left:1365.3px;top:731.25px;width:38.5px;height:38.5px;border-radius:50%;background:#d1ebdd;color:#1b5d37;font-size:15px;line-height:38.5px;text-align:center;letter-spacing:0.4px;text-indent:0.4px;padding-top:1.2px"><span style="display:inline-block;transform:scaleX(1.1)">MZ</span></div>
<div class="a" style="left:1390px;top:756.1px;width:16px;height:16px;border-radius:50%;background:#c4314b;border:2px solid #232323"></div>
<div class="a" style="left:1413px;top:733.5px;width:117px;height:34px;overflow:hidden;background:#222222"><div class="a" style="left:0;top:0;width:100%;height:100%;filter:blur(6px)"><div class="a" style="left:1px;top:10.0px;width:44px;height:14px;background:#747474"></div><div class="a" style="left:52px;top:10.0px;width:44px;height:14px;background:#747474"></div></div></div>
<svg class="a" style="left:1657px;top:738.5px" width="24" height="24" viewBox="0 0 24 24" fill="none" stroke="#e6e6e6" stroke-width="1.3" stroke-linecap="round">
 <path d="M9.05 6.15a2.8 2.8 0 0 1 5.6 0v5.7a2.8 2.8 0 0 1-5.6 0z"/>
 <path d="M6.25 11.5c0 3 2.5 5.35 5.7 5.35s5.7-2.35 5.7-5.35M11.95 16.85v3.7"/>
 <path d="M2.9 3.3L21 20.6" stroke="#1f1f1f" stroke-width="3.2"/>
 <path d="M2.9 3.3L21 20.6"/>
</svg>
<div class="a" style="left:1365.3px;top:791.25px;width:38.5px;height:38.5px;border-radius:50%;background:#fde8cd;color:#794e12;font-size:15px;line-height:38.5px;text-align:center;letter-spacing:0.4px;text-indent:0.4px;padding-top:1.2px"><span style="display:inline-block;transform:scaleX(1.1)">NB</span></div>
<div class="a" style="left:1390px;top:816.1px;width:16px;height:16px;border-radius:50%;background:#c4314b;border:2px solid #232323"></div>
<div class="a" style="left:1413px;top:793.5px;width:102px;height:34px;overflow:hidden;background:#222222"><div class="a" style="left:0;top:0;width:100%;height:100%;filter:blur(6px)"><div class="a" style="left:1px;top:10.0px;width:36px;height:14px;background:#747474"></div><div class="a" style="left:42px;top:10.0px;width:39px;height:14px;background:#747474"></div></div></div>
<svg class="a" style="left:1657px;top:798.5px" width="24" height="24" viewBox="0 0 24 24" fill="none" stroke="#e6e6e6" stroke-width="1.3" stroke-linecap="round">
 <path d="M9.05 6.15a2.8 2.8 0 0 1 5.6 0v5.7a2.8 2.8 0 0 1-5.6 0z"/>
 <path d="M6.25 11.5c0 3 2.5 5.35 5.7 5.35s5.7-2.35 5.7-5.35M11.95 16.85v3.7"/>
 <path d="M2.9 3.3L21 20.6" stroke="#1f1f1f" stroke-width="3.2"/>
 <path d="M2.9 3.3L21 20.6"/>
</svg>
<div class="a" style="left:1365.3px;top:851.25px;width:38.5px;height:38.5px;border-radius:50%;background:#ebd2e4;color:#611b46;font-size:15px;line-height:38.5px;text-align:center;letter-spacing:0.4px;text-indent:0.4px;padding-top:1.2px"><span style="display:inline-block;transform:scaleX(1.1)">NB</span></div>
<div class="a" style="left:1390px;top:876.1px;width:16px;height:16px;border-radius:50%;background:#c4314b;border:2px solid #232323"></div>
<div class="a" style="left:1413px;top:853.5px;width:107px;height:34px;overflow:hidden;background:#222222"><div class="a" style="left:0;top:0;width:100%;height:100%;filter:blur(6px)"><div class="a" style="left:1px;top:10.0px;width:39px;height:14px;background:#747474"></div><div class="a" style="left:44px;top:10.0px;width:42px;height:14px;background:#747474"></div></div></div>
<svg class="a" style="left:1657px;top:858.5px" width="24" height="24" viewBox="0 0 24 24" fill="none" stroke="#e6e6e6" stroke-width="1.3" stroke-linecap="round">
 <path d="M9.05 6.15a2.8 2.8 0 0 1 5.6 0v5.7a2.8 2.8 0 0 1-5.6 0z"/>
 <path d="M6.25 11.5c0 3 2.5 5.35 5.7 5.35s5.7-2.35 5.7-5.35M11.95 16.85v3.7"/>
 <path d="M2.9 3.3L21 20.6" stroke="#1f1f1f" stroke-width="3.2"/>
 <path d="M2.9 3.3L21 20.6"/>
</svg>
<div class="a" style="left:1365.3px;top:911.25px;width:38.5px;height:38.5px;border-radius:50%;background:#d0dcef;color:#19366b;font-size:15px;line-height:38.5px;text-align:center;letter-spacing:0.4px;text-indent:0.4px;padding-top:1.2px"><span style="display:inline-block;transform:scaleX(1.1)">NM</span></div>
<div class="a" style="left:1390px;top:936.1px;width:16px;height:16px;border-radius:50%;background:#c4314b;border:2px solid #232323"></div>
<div class="a" style="left:1413px;top:913.5px;width:133px;height:34px;overflow:hidden;background:#222222"><div class="a" style="left:0;top:0;width:100%;height:100%;filter:blur(6px)"><div class="a" style="left:1px;top:10.0px;width:49px;height:14px;background:#747474"></div><div class="a" style="left:55px;top:10.0px;width:57px;height:14px;background:#747474"></div></div></div>
<svg class="a" style="left:1657px;top:918.5px" width="24" height="24" viewBox="0 0 24 24" fill="none" stroke="#e6e6e6" stroke-width="1.3" stroke-linecap="round">
 <path d="M9.05 6.15a2.8 2.8 0 0 1 5.6 0v5.7a2.8 2.8 0 0 1-5.6 0z"/>
 <path d="M6.25 11.5c0 3 2.5 5.35 5.7 5.35s5.7-2.35 5.7-5.35M11.95 16.85v3.7"/>
 <path d="M2.9 3.3L21 20.6" stroke="#1f1f1f" stroke-width="3.2"/>
 <path d="M2.9 3.3L21 20.6"/>
</svg>
<div class="a" style="left:1365.3px;top:971.25px;width:38.5px;height:38.5px;border-radius:50%;background:#cbd8eb;color:#1a335f;font-size:15px;line-height:38.5px;text-align:center;letter-spacing:0.4px;text-indent:0.4px;padding-top:1.2px"><span style="display:inline-block;transform:scaleX(1.1)">NB</span></div>
<div class="a" style="left:1390px;top:996.1px;width:16px;height:16px;border-radius:50%;background:#fff;border:2px solid #232323"></div>
<div class="a" style="left:1413px;top:973.5px;width:189px;height:34px;overflow:hidden;background:#222222"><div class="a" style="left:0;top:0;width:100%;height:100%;filter:blur(6px)"><div class="a" style="left:1px;top:10.0px;width:44px;height:14px;background:#747474"></div><div class="a" style="left:52px;top:10.0px;width:60px;height:14px;background:#747474"></div><div class="a" style="left:119px;top:10.0px;width:49px;height:14px;background:#747474"></div></div></div>
<svg class="a" style="left:1657px;top:978.5px" width="24" height="24" viewBox="0 0 24 24" fill="none" stroke="#e6e6e6" stroke-width="1.3" stroke-linecap="round">
 <path d="M9.05 6.15a2.8 2.8 0 0 1 5.6 0v5.7a2.8 2.8 0 0 1-5.6 0z"/>
 <path d="M6.25 11.5c0 3 2.5 5.35 5.7 5.35s5.7-2.35 5.7-5.35M11.95 16.85v3.7"/>
 <path d="M2.9 3.3L21 20.6" stroke="#1f1f1f" stroke-width="3.2"/>
 <path d="M2.9 3.3L21 20.6"/>
</svg>
<div class="a" style="left:1365.3px;top:1031.25px;width:38.5px;height:38.5px;border-radius:50%;background:#f5d5cf;color:#7b2518;font-size:15px;line-height:38.5px;text-align:center;letter-spacing:0.4px;text-indent:0.4px;padding-top:1.2px"><span style="display:inline-block;transform:scaleX(1.1)">NB</span></div>
<div class="a" style="left:1390px;top:1056.1px;width:16px;height:16px;border-radius:50%;background:#c4314b;border:2px solid #232323"></div>
<div class="a" style="left:1413px;top:1033.5px;width:120px;height:34px;overflow:hidden;background:#222222"><div class="a" style="left:0;top:0;width:100%;height:100%;filter:blur(6px)"><div class="a" style="left:1px;top:10.0px;width:44px;height:14px;background:#747474"></div><div class="a" style="left:52px;top:10.0px;width:47px;height:14px;background:#747474"></div></div></div>
<svg class="a" style="left:1657px;top:1038.5px" width="24" height="24" viewBox="0 0 24 24" fill="none" stroke="#e6e6e6" stroke-width="1.3" stroke-linecap="round">
 <path d="M9.05 6.15a2.8 2.8 0 0 1 5.6 0v5.7a2.8 2.8 0 0 1-5.6 0z"/>
 <path d="M6.25 11.5c0 3 2.5 5.35 5.7 5.35s5.7-2.35 5.7-5.35M11.95 16.85v3.7"/>
 <path d="M2.9 3.3L21 20.6" stroke="#1f1f1f" stroke-width="3.2"/>
 <path d="M2.9 3.3L21 20.6"/>
</svg>
<!-- /ROWS -->
<div class="a" style="left:1708px;top:671px;width:10px;height:66px;border-radius:5px;background:#7a7a7a"></div>
</body></html>
